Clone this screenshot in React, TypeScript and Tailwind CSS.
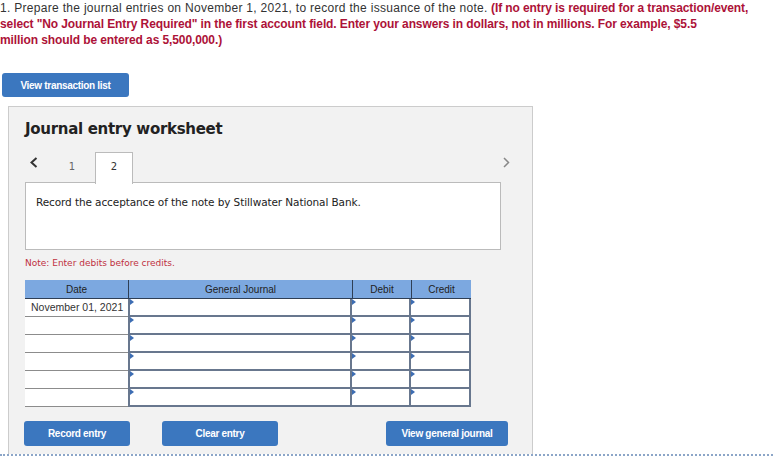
const verdana = "font-['DejaVu_Sans',Verdana,sans-serif]";

function Triangle() {
  return (
    <svg className="absolute left-0 top-0" width="4" height="6" viewBox="0 0 4 6">
      <polygon points="0,0 4,3 0,6" fill="#3d6db3" />
    </svg>
  );
}

function InputCell({ width }: { width: string }) {
  return (
    <div className={`relative h-full bg-white border-r-2 border-b-2 border-[#68778e] ${width}`}>
      <Triangle />
    </div>
  );
}

function Row({ date }: { date?: string }) {
  return (
    <div className="flex h-[18px]">
      <div className="flex w-[103px] items-center border-b border-[#8c8c8c] bg-white pl-[6px] text-[10.5px] text-[#333]">
        {date}
      </div>
      <div className="flex h-full border-l-2 border-[#68778e]">
        <InputCell width="w-[222px]" />
        <InputCell width="w-[59px]" />
        <InputCell width="w-[60px]" />
      </div>
    </div>
  );
}

export default function App() {
  const rows = ["November 01, 2021", "", "", "", "", ""];

  return (
    <div className="h-[456px] w-[773px] overflow-hidden bg-white font-['Liberation_Sans',Arial,sans-serif]">
      {/* instructions */}
      <p className="whitespace-nowrap text-[12px] leading-[16px] text-[#333]">
        <span className="tracking-[0.3px]">
          1. Prepare the journal entries on November 1, 2021, to record the issuance of the note.
        </span>{" "}
        <span className="font-bold tracking-[-0.1px] text-[#ad1238]">
          (If no entry is required for a transaction/event,
          <br />
          select "No Journal Entry Required" in the first account field. Enter your answers in dollars, not in millions.
          For example, $5.5
          <br />
          million should be entered as 5,500,000.)
        </span>
      </p>

      <button className="ml-[2px] mt-[25px] block h-[24px] w-[127px] rounded-[3px] bg-[#3b77bf] text-[10px] font-bold tracking-[-0.3px] text-white">
        View transaction list
      </button>

      {/* worksheet panel */}
      <section className="ml-[8px] mt-[9px] h-[348px] w-[525px] border border-b-0 border-[#cccccc] bg-[#f2f2f2] pl-[16px] pt-[12px]">
        <h2 className={`${verdana} text-[15px] font-bold leading-[20px] tracking-[-0.3px] text-[#222]`}>
          Journal entry worksheet
        </h2>

        {/* tabs */}
        <div className="mt-[13px] flex h-[31px] w-[485px] items-start">
          <svg className="ml-[5px] mt-[5px]" width="8" height="11" viewBox="0 0 8 11">
            <polyline points="6.5,1 1.5,5.5 6.5,10" fill="none" stroke="#333" strokeWidth="2" />
          </svg>
          <span className={`${verdana} ml-[24px] mt-[7px] w-[20px] text-center text-[10px] text-[#666]`}>1</span>
          <div
            className={`${verdana} relative z-10 ml-[13px] flex h-[32px] w-[38px] items-center justify-center border border-b-0 border-[#bbbbbb] bg-white pb-[4px] text-[10px] text-[#333]`}
          >
            2
          </div>
          <svg className="ml-auto mt-[5px]" width="7" height="11" viewBox="0 0 7 11">
            <polyline points="1,1 5.5,5.5 1,10" fill="none" stroke="#888" strokeWidth="1.5" />
          </svg>
        </div>

        {/* description */}
        <div className="-mt-px h-[68px] w-[476px] border border-[#bbbbbb] bg-white pl-[10px] pt-[12px]">
          <p className={`${verdana} text-[10.5px] tracking-[-0.1px] text-[#222]`}>
            Record the acceptance of the note by Stillwater National Bank.
          </p>
        </div>

        <p className={`${verdana} mt-[7px] text-[9px] leading-[12px] text-[#c0303f]`}>
          Note: Enter debits before credits.
        </p>

        {/* journal table */}
        <div className="mt-[11px] w-[446px]">
          <div className="flex h-[19px] border-b border-[#2f3f55] bg-[#7ca8e0] text-[10px] text-[#222]">
            <div className="flex w-[103px] items-center justify-center">Date</div>
            <div className="flex w-[224px] items-center justify-center border-l border-[#2f3f55]">General Journal</div>
            <div className="flex w-[59px] items-center justify-center border-l border-[#2f3f55]">Debit</div>
            <div className="flex w-[60px] items-center justify-center border-l border-[#2f3f55]">Credit</div>
          </div>
          {rows.map((d, i) => (
            <Row key={i} date={d} />
          ))}
        </div>

        {/* actions */}
        <div className="-ml-px mt-[14px] flex">
          <button className="h-[25px] w-[106px] rounded-[3px] bg-[#3b77bf] text-[10px] font-bold tracking-[-0.3px] text-white">
            Record entry
          </button>
          <button className="ml-[32px] h-[25px] w-[116px] rounded-[3px] bg-[#3b77bf] text-[10px] font-bold tracking-[-0.3px] text-white">
            Clear entry
          </button>
          <button className="ml-[108px] h-[25px] w-[122px] rounded-[3px] bg-[#3b77bf] text-[10px] font-bold tracking-[-0.3px] text-white">
            View general journal
          </button>
        </div>
      </section>

      <div className="h-[2px] w-full border-t-2 border-dotted border-[#8ca6c8]" />
    </div>
  );
}
